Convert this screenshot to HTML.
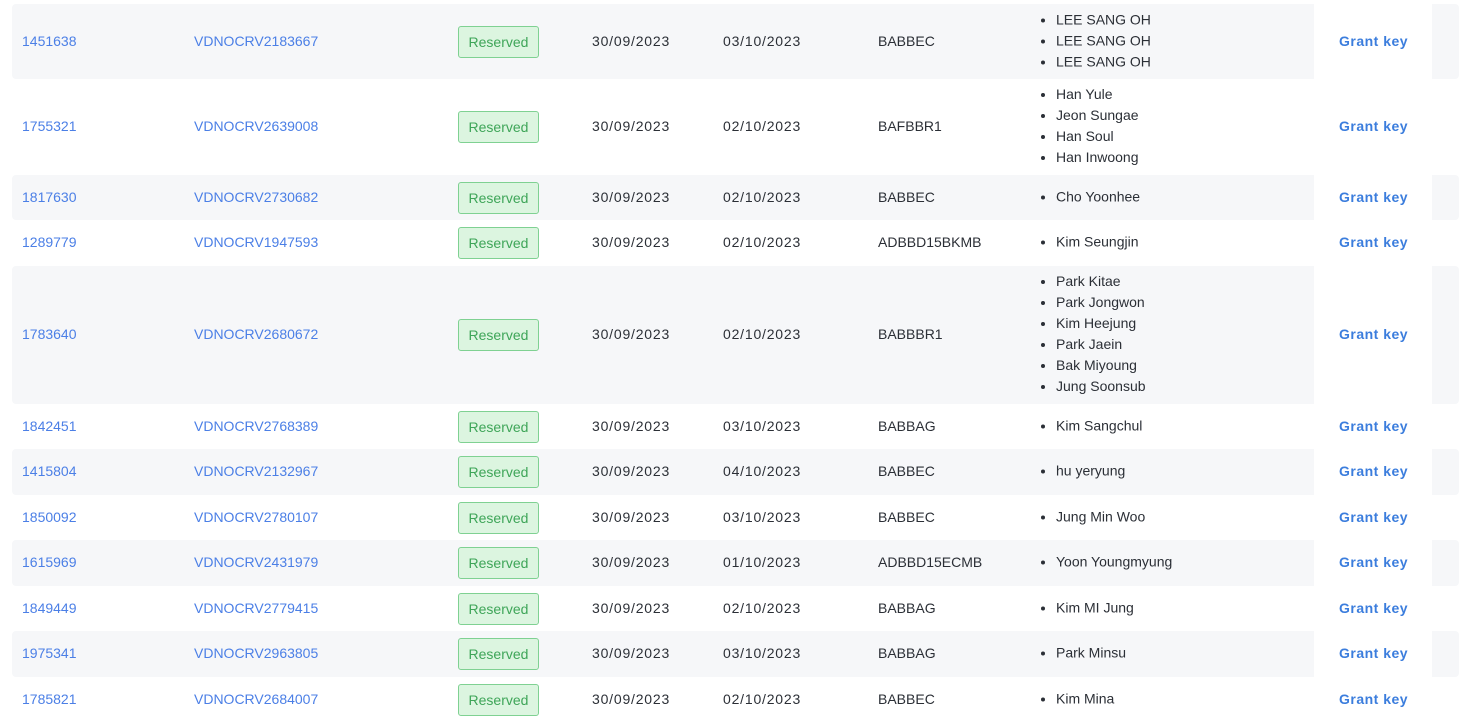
<!DOCTYPE html>
<html><head><meta charset="utf-8"><style>
body{margin:0;width:1472px;height:722px;overflow:hidden;background:#fff;font-family:"Liberation Sans",sans-serif;font-size:14px;color:#2b2f36}
.r{position:absolute;left:0;width:1472px}
.bg{position:absolute;left:12px;width:1302px;top:0;bottom:0;background:#f6f7f9;border-radius:4px 0 0 4px}
.bg2{position:absolute;left:1432px;width:27px;top:0;bottom:0;background:#f6f7f9;border-radius:0 4px 4px 0}
.c{position:absolute;top:50%;transform:translateY(calc(-50% - 1px));white-space:nowrap}
.a{color:#4b7fe6}
.d{letter-spacing:0.8px}
.b{left:458px;width:79px;height:30px;line-height:30px;text-align:center;background:#dcf5e0;border:1px solid #7fd192;border-radius:3px;color:#3ea558;transform:translateY(-50%)}
.g{left:1339px;color:#3b7ddd;font-weight:bold;letter-spacing:0.5px}
ul{margin:0;padding:0 0 0 18px;line-height:21px}
</style></head><body>
<div class="r" style="top:4px;height:75px"><div class="bg"></div><div class="bg2"></div><span class="c a" style="left:22px">1451638</span><span class="c a" style="left:194px">VDNOCRV2183667</span><span class="c b">Reserved</span><span class="c d" style="left:592px">30/09/2023</span><span class="c d" style="left:723px">03/10/2023</span><span class="c" style="left:878px">BABBEC</span><ul class="c" style="left:1038px"><li>LEE SANG OH</li><li>LEE SANG OH</li><li>LEE SANG OH</li></ul><span class="c g">Grant key</span></div>
<div class="r" style="top:79px;height:96px"><span class="c a" style="left:22px">1755321</span><span class="c a" style="left:194px">VDNOCRV2639008</span><span class="c b">Reserved</span><span class="c d" style="left:592px">30/09/2023</span><span class="c d" style="left:723px">02/10/2023</span><span class="c" style="left:878px">BAFBBR1</span><ul class="c" style="left:1038px"><li>Han Yule</li><li>Jeon Sungae</li><li>Han Soul</li><li>Han Inwoong</li></ul><span class="c g">Grant key</span></div>
<div class="r" style="top:175px;height:45px"><div class="bg"></div><div class="bg2"></div><span class="c a" style="left:22px">1817630</span><span class="c a" style="left:194px">VDNOCRV2730682</span><span class="c b">Reserved</span><span class="c d" style="left:592px">30/09/2023</span><span class="c d" style="left:723px">02/10/2023</span><span class="c" style="left:878px">BABBEC</span><ul class="c" style="left:1038px"><li>Cho Yoonhee</li></ul><span class="c g">Grant key</span></div>
<div class="r" style="top:220px;height:46px"><span class="c a" style="left:22px">1289779</span><span class="c a" style="left:194px">VDNOCRV1947593</span><span class="c b">Reserved</span><span class="c d" style="left:592px">30/09/2023</span><span class="c d" style="left:723px">02/10/2023</span><span class="c" style="left:878px">ADBBD15BKMB</span><ul class="c" style="left:1038px"><li>Kim Seungjin</li></ul><span class="c g">Grant key</span></div>
<div class="r" style="top:266px;height:138px"><div class="bg"></div><div class="bg2"></div><span class="c a" style="left:22px">1783640</span><span class="c a" style="left:194px">VDNOCRV2680672</span><span class="c b">Reserved</span><span class="c d" style="left:592px">30/09/2023</span><span class="c d" style="left:723px">02/10/2023</span><span class="c" style="left:878px">BABBBR1</span><ul class="c" style="left:1038px"><li>Park Kitae</li><li>Park Jongwon</li><li>Kim Heejung</li><li>Park Jaein</li><li>Bak Miyoung</li><li>Jung Soonsub</li></ul><span class="c g">Grant key</span></div>
<div class="r" style="top:404px;height:45px"><span class="c a" style="left:22px">1842451</span><span class="c a" style="left:194px">VDNOCRV2768389</span><span class="c b">Reserved</span><span class="c d" style="left:592px">30/09/2023</span><span class="c d" style="left:723px">03/10/2023</span><span class="c" style="left:878px">BABBAG</span><ul class="c" style="left:1038px"><li>Kim Sangchul</li></ul><span class="c g">Grant key</span></div>
<div class="r" style="top:449px;height:46px"><div class="bg"></div><div class="bg2"></div><span class="c a" style="left:22px">1415804</span><span class="c a" style="left:194px">VDNOCRV2132967</span><span class="c b">Reserved</span><span class="c d" style="left:592px">30/09/2023</span><span class="c d" style="left:723px">04/10/2023</span><span class="c" style="left:878px">BABBEC</span><ul class="c" style="left:1038px"><li>hu yeryung</li></ul><span class="c g">Grant key</span></div>
<div class="r" style="top:495px;height:45px"><span class="c a" style="left:22px">1850092</span><span class="c a" style="left:194px">VDNOCRV2780107</span><span class="c b">Reserved</span><span class="c d" style="left:592px">30/09/2023</span><span class="c d" style="left:723px">03/10/2023</span><span class="c" style="left:878px">BABBEC</span><ul class="c" style="left:1038px"><li>Jung Min Woo</li></ul><span class="c g">Grant key</span></div>
<div class="r" style="top:540px;height:46px"><div class="bg"></div><div class="bg2"></div><span class="c a" style="left:22px">1615969</span><span class="c a" style="left:194px">VDNOCRV2431979</span><span class="c b">Reserved</span><span class="c d" style="left:592px">30/09/2023</span><span class="c d" style="left:723px">01/10/2023</span><span class="c" style="left:878px">ADBBD15ECMB</span><ul class="c" style="left:1038px"><li>Yoon Youngmyung</li></ul><span class="c g">Grant key</span></div>
<div class="r" style="top:586px;height:45px"><span class="c a" style="left:22px">1849449</span><span class="c a" style="left:194px">VDNOCRV2779415</span><span class="c b">Reserved</span><span class="c d" style="left:592px">30/09/2023</span><span class="c d" style="left:723px">02/10/2023</span><span class="c" style="left:878px">BABBAG</span><ul class="c" style="left:1038px"><li>Kim MI Jung</li></ul><span class="c g">Grant key</span></div>
<div class="r" style="top:631px;height:46px"><div class="bg"></div><div class="bg2"></div><span class="c a" style="left:22px">1975341</span><span class="c a" style="left:194px">VDNOCRV2963805</span><span class="c b">Reserved</span><span class="c d" style="left:592px">30/09/2023</span><span class="c d" style="left:723px">03/10/2023</span><span class="c" style="left:878px">BABBAG</span><ul class="c" style="left:1038px"><li>Park Minsu</li></ul><span class="c g">Grant key</span></div>
<div class="r" style="top:677px;height:45px"><span class="c a" style="left:22px">1785821</span><span class="c a" style="left:194px">VDNOCRV2684007</span><span class="c b">Reserved</span><span class="c d" style="left:592px">30/09/2023</span><span class="c d" style="left:723px">02/10/2023</span><span class="c" style="left:878px">BABBEC</span><ul class="c" style="left:1038px"><li>Kim Mina</li></ul><span class="c g">Grant key</span></div>
</body></html>
